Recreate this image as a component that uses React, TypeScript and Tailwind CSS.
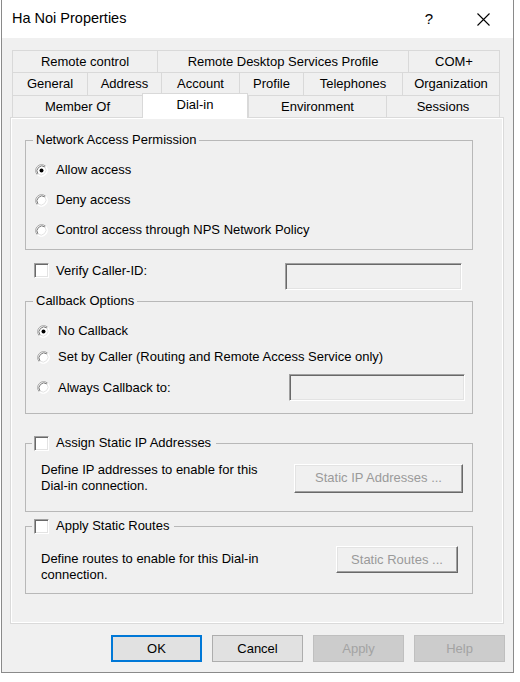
import React from 'react';

// Classic Win32 "Ha Noi Properties" dialog, Dial-in tab

type Tab = { label: string; w: number };

const rows: Tab[][] = [
  [
    { label: 'Remote control', w: 145 },
    { label: 'Remote Desktop Services Profile', w: 251 },
    { label: 'COM+', w: 92 },
  ],
  [
    { label: 'General', w: 75 },
    { label: 'Address', w: 74 },
    { label: 'Account', w: 78 },
    { label: 'Profile', w: 64 },
    { label: 'Telephones', w: 99 },
    { label: 'Organization', w: 98 },
  ],
];

function Radio({ checked = false }: { checked?: boolean }) {
  return (
    <svg width="13" height="13" viewBox="0 0 13 13" className="shrink-0">
      <circle cx="6.5" cy="6.5" r="6" fill="#fff" />
      <path d="M2.26 10.74 A6 6 0 0 1 10.74 2.26" stroke="#a0a0a0" fill="none" />
      <path d="M3 10 A5 5 0 0 1 10 3" stroke="#7a7a7a" fill="none" />
      <path d="M10.74 2.26 A6 6 0 0 1 2.26 10.74" stroke="#fff" fill="none" />
      <path d="M10 3 A5 5 0 0 1 3 10" stroke="#e3e3e3" fill="none" />
      {checked && <circle cx="6.5" cy="6.5" r="2" fill="#000" />}
    </svg>
  );
}

function Checkbox() {
  return (
    <span className="block h-[15px] w-[15px] shrink-0 border border-t-[#a0a0a0] border-l-[#a0a0a0] border-r-white border-b-white bg-white shadow-[inset_1px_1px_0_#696969,inset_-1px_-1px_0_#e3e3e3]" />
  );
}

function SunkenBox({ w }: { w: number }) {
  return (
    <div
      className="h-[27px] shrink-0 border border-t-[#a0a0a0] border-l-[#a0a0a0] border-r-white border-b-white bg-[#f0f0f0] shadow-[inset_1px_1px_0_#696969,inset_-1px_-1px_0_#e3e3e3]"
      style={{ width: w }}
    />
  );
}

function RaisedButton({ label, w, h }: { label: string; w: number; h: number }) {
  return (
    <div
      className="flex shrink-0 items-center justify-center border border-t-white border-l-white border-r-[#696969] border-b-[#696969] bg-[#f0f0f0] text-[#9a9a9a] shadow-[inset_-1px_-1px_0_#a0a0a0,inset_1px_1px_0_#e3e3e3]"
      style={{ width: w, height: h }}
    >
      {label}
    </div>
  );
}

function TabCell({ label, w, last }: Tab & { last?: boolean }) {
  return (
    <div
      className={`flex shrink-0 items-center justify-center border-t border-l border-[#d9d9d9] bg-[#f0f0f0] ${last ? 'border-r' : ''}`}
      style={{ width: w }}
    >
      {label}
    </div>
  );
}

function Dialog() {
  return (
    <div className="ml-px flex h-[673px] w-[513px] flex-col border border-t-0 border-[#8a8a8a] bg-[#f0f0f0]">
      {/* title bar */}
      <div className="flex h-[38px] shrink-0 items-center bg-white pl-[10px] pr-[16px]">
        <span className="text-[14.5px]">Ha Noi Properties</span>
        <span className="ml-auto w-[20px] text-center text-[15px]">?</span>
        <svg width="13" height="13" viewBox="0 0 13 13" className="ml-[38px] mr-[7px]">
          <path d="M0.5 0.5 L12.5 12.5 M12.5 0.5 L0.5 12.5" stroke="#000" strokeWidth="1.1" />
        </svg>
      </div>

      <div className="flex flex-1 flex-col pt-[12px] text-[13px] leading-[16px]">
        {/* tabs */}
        <div className="pl-[10px]">
          <div className="flex h-[22px]">
            {rows[0].map((t, i) => (
              <TabCell key={t.label} {...t} last={i === rows[0].length - 1} />
            ))}
          </div>
          <div className="flex h-[23px]">
            {rows[1].map((t, i) => (
              <TabCell key={t.label} {...t} last={i === rows[1].length - 1} />
            ))}
          </div>
          <div className="flex h-[22px]">
            <TabCell label="Member Of" w={130} />
            <div className="relative z-10 -mt-[2px] flex h-[25px] w-[106px] shrink-0 items-center justify-center border-x border-t border-[#d9d9d9] bg-white pb-[3px]">
              Dial-in
            </div>
            <TabCell label="Environment" w={138} />
            <TabCell label="Sessions" w={114} last />
          </div>
        </div>

        {/* page */}
        <div className="ml-[8px] h-[507px] w-[494px] border border-[#dadada] bg-[#f0f0f0] pl-[14px] pt-[14px] shadow-[inset_1px_1px_0_#fff,inset_-1px_-1px_0_#fff]">
          <fieldset className="w-[448px] border border-[#b8b8b8]">
            <legend className="ml-[7px] px-[3px]">Network Access Permission</legend>
            <div className="flex flex-col gap-[10px] pb-[9px] pl-[9px] pt-[12px]">
              <label className="flex h-[20px] items-center gap-[8px]">
                <Radio checked />
                Allow access
              </label>
              <label className="flex h-[20px] items-center gap-[8px]">
                <Radio />
                Deny access
              </label>
              <label className="flex h-[20px] items-center gap-[8px]">
                <Radio />
                Control access through NPS Network Policy
              </label>
            </div>
          </fieldset>

          <div className="mt-[13px] flex w-[448px] items-start pl-[9px] pr-[11px]">
            <Checkbox />
            <span className="ml-[7px]">Verify Caller-ID:</span>
            <div className="ml-auto">
              <SunkenBox w={177} />
            </div>
          </div>

          <fieldset className="mt-[3px] w-[448px] border border-[#b8b8b8]">
            <legend className="ml-[7px] px-[3px]">Callback Options</legend>
            <div className="flex flex-col pb-[12px] pl-[11px] pr-[7px] pt-[12px]">
              <label className="flex h-[20px] items-center gap-[8px]">
                <Radio checked />
                No Callback
              </label>
              <label className="mt-[6px] flex h-[20px] items-center gap-[8px]">
                <Radio />
                Set by Caller (Routing and Remote Access Service only)
              </label>
              <div className="mt-[7px] flex h-[27px] items-center gap-[8px]">
                <Radio />
                <span>Always Callback to:</span>
                <div className="ml-auto">
                  <SunkenBox w={176} />
                </div>
              </div>
            </div>
          </fieldset>

          <fieldset className="mt-[21px] w-[448px] border border-[#b8b8b8]">
            <legend className="ml-[6px] flex h-[16px] items-center gap-[7px] px-[2px] pr-[5px]">
              <Checkbox />
              Assign Static IP Addresses
            </legend>
            <div className="flex items-center pb-[17px] pl-[15px] pr-[9px] pt-[11px]">
              <p>
                Define IP addresses to enable for this
                <br />
                Dial-in connection.
              </p>
              <div className="ml-auto">
                <RaisedButton label="Static IP Addresses ..." w={169} h={29} />
              </div>
            </div>
          </fieldset>

          <fieldset className="mt-[6px] w-[448px] border border-[#b8b8b8]">
            <legend className="ml-[6px] flex h-[16px] items-center gap-[7px] px-[2px] pr-[5px]">
              <Checkbox />
              Apply Static Routes
            </legend>
            <div className="flex items-start pb-[10px] pl-[15px] pr-[14px] pt-[12px]">
              <p className="mt-[5px]">
                Define routes to enable for this Dial-in
                <br />
                connection.
              </p>
              <div className="ml-auto">
                <RaisedButton label="Static Routes ..." w={122} h={27} />
              </div>
            </div>
          </fieldset>
        </div>

        {/* dialog buttons */}
        <div className="mt-[11px] flex justify-end gap-[10px] pr-[8px]">
          <button className="h-[27px] w-[91px] border-2 border-[#0078d7] bg-[#e1e1e1]">OK</button>
          <button className="h-[27px] w-[91px] border border-[#adadad] bg-[#e1e1e1]">Cancel</button>
          <button className="h-[27px] w-[91px] border border-[#bfbfbf] bg-[#cccccc] text-[#a3a3a3]">Apply</button>
          <button className="h-[27px] w-[91px] border border-[#bfbfbf] bg-[#cccccc] text-[#a3a3a3]">Help</button>
        </div>
      </div>
    </div>
  );
}

export default function App() {
  return (
    <div className="h-[682px] w-[520px] overflow-hidden bg-white font-['Liberation_Sans',Arial,sans-serif] text-black">
      <Dialog />
    </div>
  );
}
